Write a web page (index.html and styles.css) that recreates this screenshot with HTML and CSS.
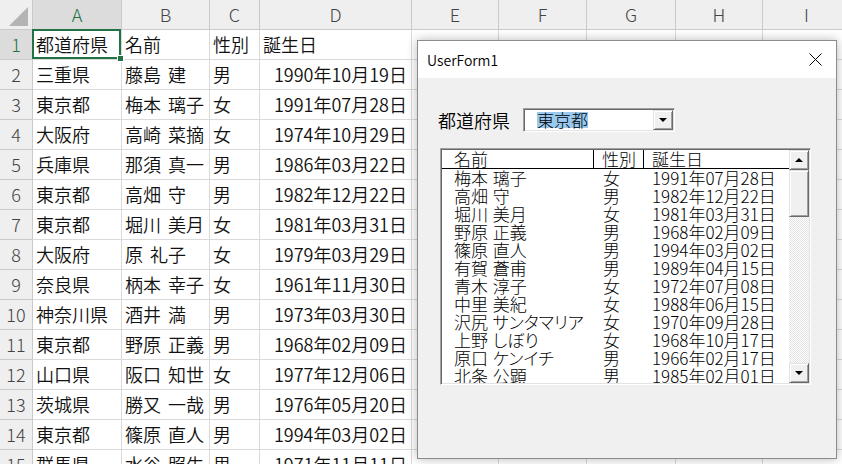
FILE: index.html
```html
<!DOCTYPE html>
<html lang="ja">
<head>
<meta charset="utf-8">
<title>Sheet with UserForm</title>
<link rel="stylesheet" href="styles.css">
</head>
<body>
<div class="sheet">
  <div class="row hrow">
    <div class="corner"><svg width="32" height="29" viewBox="0 0 32 29"><polygon points="9,26 28,26 28,7" fill="#b4b4b4"/></svg></div>
    <div class="hsel">A</div><div>B</div><div>C</div><div>D</div><div>E</div><div>F</div><div>G</div><div>H</div><div>I</div>
  </div>
  <div class="row"><div class="rh rsel">1</div><div class="active">都道府県</div><div>名前</div><div>性別</div><div>誕生日</div><div></div><div></div><div></div><div></div><div></div></div>
  <div class="row"><div class="rh">2</div><div>三重県</div><div>藤島 建</div><div>男</div><div class="d">1990年10月19日</div><div></div><div></div><div></div><div></div><div></div></div>
  <div class="row"><div class="rh">3</div><div>東京都</div><div>梅本 璃子</div><div>女</div><div class="d">1991年07月28日</div><div></div><div></div><div></div><div></div><div></div></div>
  <div class="row"><div class="rh">4</div><div>大阪府</div><div>高崎 菜摘</div><div>女</div><div class="d">1974年10月29日</div><div></div><div></div><div></div><div></div><div></div></div>
  <div class="row"><div class="rh">5</div><div>兵庫県</div><div>那須 真一</div><div>男</div><div class="d">1986年03月22日</div><div></div><div></div><div></div><div></div><div></div></div>
  <div class="row"><div class="rh">6</div><div>東京都</div><div>高畑 守</div><div>男</div><div class="d">1982年12月22日</div><div></div><div></div><div></div><div></div><div></div></div>
  <div class="row"><div class="rh">7</div><div>東京都</div><div>堀川 美月</div><div>女</div><div class="d">1981年03月31日</div><div></div><div></div><div></div><div></div><div></div></div>
  <div class="row"><div class="rh">8</div><div>大阪府</div><div>原 礼子</div><div>女</div><div class="d">1979年03月29日</div><div></div><div></div><div></div><div></div><div></div></div>
  <div class="row"><div class="rh">9</div><div>奈良県</div><div>柄本 幸子</div><div>女</div><div class="d">1961年11月30日</div><div></div><div></div><div></div><div></div><div></div></div>
  <div class="row"><div class="rh">10</div><div>神奈川県</div><div>酒井 満</div><div>男</div><div class="d">1973年03月30日</div><div></div><div></div><div></div><div></div><div></div></div>
  <div class="row"><div class="rh">11</div><div>東京都</div><div>野原 正義</div><div>男</div><div class="d">1968年02月09日</div><div></div><div></div><div></div><div></div><div></div></div>
  <div class="row"><div class="rh">12</div><div>山口県</div><div>阪口 知世</div><div>女</div><div class="d">1977年12月06日</div><div></div><div></div><div></div><div></div><div></div></div>
  <div class="row"><div class="rh">13</div><div>茨城県</div><div>勝又 一哉</div><div>男</div><div class="d">1976年05月20日</div><div></div><div></div><div></div><div></div><div></div></div>
  <div class="row"><div class="rh">14</div><div>東京都</div><div>篠原 直人</div><div>男</div><div class="d">1994年03月02日</div><div></div><div></div><div></div><div></div><div></div></div>
  <div class="row"><div class="rh">15</div><div>群馬県</div><div>水谷 照生</div><div>男</div><div class="d">1971年11月11日</div><div></div><div></div><div></div><div></div><div></div></div>
</div>

<div class="form">
  <div class="titlebar">
    <span class="title">UserForm1</span>
    <svg class="close" width="13" height="13" viewBox="0 0 13 13"><path d="M0.5 0.5L12.5 12.5M12.5 0.5L0.5 12.5" stroke="#000" stroke-width="1" fill="none"/></svg>
  </div>
  <div class="formbody">
    <div class="field">
      <span class="lbl">都道府県</span>
      <div class="combo">
        <span class="hl">東京都</span>
        <span class="dropbtn"><span class="tri-down"></span></span>
      </div>
    </div>
    <div class="listbox">
      <div class="listmain">
        <div class="lrow lhead"><span class="c1">名前</span><span class="c2">性別</span><span class="c3">誕生日</span></div>
        <div class="lrow"><span class="c1">梅本 璃子</span><span class="c2">女</span><span class="c3">1991年07月28日</span></div>
        <div class="lrow"><span class="c1">高畑 守</span><span class="c2">男</span><span class="c3">1982年12月22日</span></div>
        <div class="lrow"><span class="c1">堀川 美月</span><span class="c2">女</span><span class="c3">1981年03月31日</span></div>
        <div class="lrow"><span class="c1">野原 正義</span><span class="c2">男</span><span class="c3">1968年02月09日</span></div>
        <div class="lrow"><span class="c1">篠原 直人</span><span class="c2">男</span><span class="c3">1994年03月02日</span></div>
        <div class="lrow"><span class="c1">有賀 蒼甫</span><span class="c2">男</span><span class="c3">1989年04月15日</span></div>
        <div class="lrow"><span class="c1">青木 淳子</span><span class="c2">女</span><span class="c3">1972年07月08日</span></div>
        <div class="lrow"><span class="c1">中里 美紀</span><span class="c2">女</span><span class="c3">1988年06月15日</span></div>
        <div class="lrow"><span class="c1">沢尻 サンタマリア</span><span class="c2">女</span><span class="c3">1970年09月28日</span></div>
        <div class="lrow"><span class="c1">上野 しぼり</span><span class="c2">女</span><span class="c3">1968年10月17日</span></div>
        <div class="lrow"><span class="c1">原口 ケンイチ</span><span class="c2">男</span><span class="c3">1966年02月17日</span></div>
        <div class="lrow"><span class="c1">北条 公顕</span><span class="c2">男</span><span class="c3">1985年02月01日</span></div>
      </div>
      <div class="vscroll">
        <div class="sbtn"><span class="tri-up"></span></div>
        <div class="thumb"></div>
        <div class="track"></div>
        <div class="sbtn"><span class="tri-down"></span></div>
      </div>
    </div>
  </div>
</div>
</body>
</html>
```
FILE: styles.css
```css
html, body {
  margin: 0;
  padding: 0;
}
body {
  width: 842px;
  height: 464px;
  overflow: hidden;
  position: relative;
  background: #fff;
  font-family: "Noto Sans CJK JP", "Noto Sans", sans-serif;
  color: #000;
}

/* ---------- spreadsheet ---------- */
.sheet {
  width: 851px;
}
.row {
  display: grid;
  grid-template-columns: 33px 89px 88px 50px 152px 87px 88px 89px 87px 88px;
  height: 30px;
}
.row > div {
  box-sizing: border-box;
  border-right: 1px solid #dadada;
  border-bottom: 1px solid #dadada;
  font-size: 18px;
  font-weight: 350;
  line-height: 29px;
  padding-left: 3px;
  white-space: nowrap;
  overflow: hidden;
  word-spacing: 3px;
  color: #111;
}
.hrow > div {
  background: #efefef;
  border-color: #cacaca;
  text-align: center;
  padding: 0;
  color: #444;
  font-weight: 300;
}
.hrow > .hsel {
  background: #dcdcdc;
  color: #217346;
}
.hrow > .corner {
  line-height: 0;
}
.row > .rh {
  background: #efefef;
  border-color: #cacaca;
  text-align: center;
  padding: 0;
  color: #444;
  font-weight: 300;
}
.row > .rsel {
  background: #dcdcdc;
  color: #217346;
}
.row > .d {
  text-align: right;
  padding: 0 4px 0 0;
}
.row > .active {
  position: relative;
  overflow: visible;
}
.active::after {
  content: "";
  position: absolute;
  top: -1px;
  left: -1px;
  right: 0;
  bottom: 0;
  border: 2px solid #217346;
}
.active::before {
  content: "";
  position: absolute;
  right: -3px;
  bottom: -3px;
  width: 5px;
  height: 5px;
  background: #217346;
  border: 1px solid #fff;
  z-index: 2;
}

/* ---------- user form ---------- */
.form {
  position: absolute;
  left: 417px;
  top: 40px;
  width: 420px;
  height: 419px;
  box-sizing: border-box;
  border: 1px solid #8c8c8c;
  background: #f0f0f0;
  box-shadow: 0 0 10px rgba(0, 0, 0, 0.28);
  display: flex;
  flex-direction: column;
}
.titlebar {
  height: 37px;
  flex: none;
  background: #fff;
  display: flex;
  align-items: center;
  justify-content: space-between;
  padding: 0 14px 0 9px;
}
.title {
  font-family: "Noto Sans CJK JP", "Noto Sans", sans-serif;
  font-size: 14px;
  font-weight: 350;
  color: #000;
}
.close {
  display: block;
}
.formbody {
  padding: 30px 0 0 20px;
}
.field {
  display: flex;
  align-items: center;
  gap: 13px;
}
.lbl {
  font-size: 18px;
  font-weight: 350;
  line-height: 24px;
}
.combo {
  box-sizing: border-box;
  width: 152px;
  height: 24px;
  border: 1px solid;
  border-color: #a0a0a0 #fff #fff #a0a0a0;
  box-shadow: inset 1px 1px 0 #696969, inset -1px -1px 0 #e3e3e3;
  background: #fff;
  padding: 1px;
  display: flex;
  align-items: center;
  justify-content: space-between;
}
.hl {
  display: inline-block;
  margin-left: 12px;
  height: 16px;
  line-height: 16px;
  font-size: 17px;
  font-weight: 300;
  background: #99c9ef;
}
.dropbtn {
  box-sizing: border-box;
  width: 20px;
  height: 20px;
  background: #f0f0f0;
  border: 1px solid;
  border-color: #e3e3e3 #696969 #696969 #e3e3e3;
  box-shadow: inset 1px 1px 0 #fff, inset -1px -1px 0 #a0a0a0;
  display: flex;
  align-items: center;
  justify-content: center;
}
.tri-down {
  width: 0;
  height: 0;
  border-left: 4px solid transparent;
  border-right: 4px solid transparent;
  border-top: 4px solid #000;
}
.tri-up {
  width: 0;
  height: 0;
  border-left: 4px solid transparent;
  border-right: 4px solid transparent;
  border-bottom: 4px solid #000;
}

.listbox {
  box-sizing: border-box;
  margin: 16px 0 0 2px;
  width: 371px;
  height: 237px;
  border: 1px solid;
  border-color: #a0a0a0 #fff #fff #a0a0a0;
  box-shadow: inset 1px 1px 0 #696969, inset -1px -1px 0 #e3e3e3;
  padding: 1px;
  display: flex;
}
.listmain {
  flex: 1;
  background: #fff;
  overflow: hidden;
  font-size: 17px;
  font-feature-settings: "palt";
  font-weight: 300;
  word-spacing: 1px;
}
.lrow {
  display: grid;
  grid-template-columns: 151px 50px 1fr;
  height: 18px;
  line-height: 18px;
  white-space: nowrap;
}
.lrow .c1 { padding-left: 12px; }
.lrow .c2 { padding-left: 10px; }
.lrow .c3 { padding-left: 9px; }
.lhead {
  border-bottom: 1px solid #000;
}
.lhead .c2,
.lhead .c3 {
  border-left: 1px solid #000;
}
.lhead .c2 { padding-left: 8px; }
.lhead .c3 { padding-left: 8px; }

.vscroll {
  width: 20px;
  flex: none;
  display: flex;
  flex-direction: column;
}
.sbtn,
.thumb {
  box-sizing: border-box;
  background: #f0f0f0;
  border: 1px solid;
  border-color: #e3e3e3 #696969 #696969 #e3e3e3;
  box-shadow: inset 1px 1px 0 #fff, inset -1px -1px 0 #a0a0a0;
}
.sbtn {
  height: 20px;
  flex: none;
  display: flex;
  align-items: center;
  justify-content: center;
}
.thumb {
  height: 47px;
  flex: none;
}
.track {
  flex: 1;
  background: repeating-conic-gradient(#ffffff 0 25%, #e2e2e2 0 50%) 0 0 / 2px 2px;
}
```
